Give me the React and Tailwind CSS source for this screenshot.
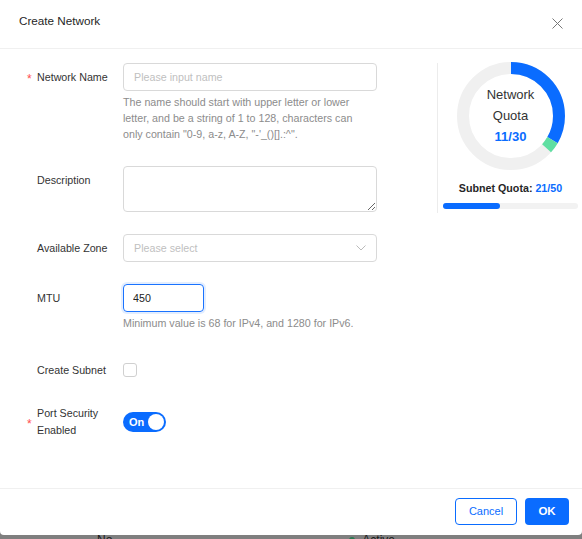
import React from "react";

const Label = ({ required, children }) => (
  <div className="w-[96px] shrink-0 flex items-start">
    <span className="w-[10px] h-[28px] flex items-center text-[#ff4d4f] text-[12px] leading-none translate-y-[2px]">
      {required ? "*" : ""}
    </span>
    <span className="leading-[28px] text-[#333]">{children}</span>
  </div>
);

const Donut = () => {
  const r = 48;
  const c = 2 * Math.PI * r;
  const used = (10 / 30) * c;
  const adding = (1 / 30) * c;
  return (
    <div className="relative w-[110px] h-[110px] mx-auto -mt-[2px]">
      <svg width="110" height="110" viewBox="0 0 110 110">
        <g transform="rotate(-90 55 55)">
          <circle cx="55" cy="55" r={r} fill="none" stroke="#f0f0f0" strokeWidth="12" />
          <circle
            cx="55"
            cy="55"
            r={r}
            fill="none"
            stroke="#0a6cff"
            strokeWidth="12"
            strokeDasharray={`${used} ${c}`}
          />
          <circle
            cx="55"
            cy="55"
            r={r}
            fill="none"
            stroke="#5fdfa2"
            strokeWidth="12"
            strokeDasharray={`0 ${used} ${adding} ${c}`}
          />
        </g>
      </svg>
      <div className="absolute inset-0 flex flex-col items-center justify-center text-[13px] leading-[21px] text-[#333] pb-[1px]">
        <span>Network</span>
        <span>Quota</span>
        <span className="font-bold text-[#0a6cff]">11/30</span>
      </div>
    </div>
  );
};

export default function App() {
  return (
    <div className="w-[582px] h-[539px] overflow-hidden bg-[#7f7f7f] font-['Liberation_Sans',Arial,sans-serif] text-[10.7px]">
      <div className="bg-white h-[535px] flex flex-col rounded-b-[4px]">
        {/* Header */}
        <div className="h-[49px] shrink-0 border-b border-[#f0f0f0] flex items-start justify-between pl-[19px] pr-[19px] pt-[13px]">
          <span className="text-[11.7px] leading-[16px] text-[#262626]">Create Network</span>
          <svg width="11" height="11" viewBox="0 0 11 11" className="mt-[5px]">
            <path d="M0.5 0.5 L10.5 10.5 M10.5 0.5 L0.5 10.5" stroke="#777" strokeWidth="1" />
          </svg>
        </div>

        {/* Body */}
        <div className="flex-1 flex pt-[14px]">
          <div className="w-[437px] shrink-0 pl-[27px]">
            {/* Network Name */}
            <div className="flex">
              <Label required>Network Name</Label>
              <div className="w-[254px]">
                <input
                  className="w-full h-[28px] border border-[#d9d9d9] rounded-[4px] px-[10px] outline-none placeholder:text-[#bfbfbf] text-[10.7px]"
                  placeholder="Please input name"
                  readOnly
                />
                <p className="mt-[3px] pr-[4px] leading-[16px] text-[#8c8c8c]">
                  The name should start with upper letter or lower letter, and be a string of 1 to 128, characters can only contain "0-9, a-z, A-Z, "-'_()[].:^".
                </p>
              </div>
            </div>

            {/* Description */}
            <div className="flex mt-[24px]">
              <Label>Description</Label>
              <textarea
                className="w-[254px] h-[46px] border border-[#d9d9d9] rounded-[4px] px-[10px] outline-none"
                readOnly
              />
            </div>

            {/* Available Zone */}
            <div className="flex mt-[22px]">
              <Label>Available Zone</Label>
              <div className="w-[254px] h-[28px] border border-[#d9d9d9] rounded-[4px] pl-[10px] pr-[10px] flex items-center justify-between">
                <span className="text-[#bfbfbf]">Please select</span>
                <svg width="10" height="6" viewBox="0 0 10 6">
                  <path d="M0.5 0.5 L5 5 L9.5 0.5" fill="none" stroke="#bbb" strokeWidth="1" />
                </svg>
              </div>
            </div>

            {/* MTU */}
            <div className="flex mt-[22px]">
              <Label>MTU</Label>
              <div>
                <input
                  className="w-[81px] h-[28px] border border-[#1a73ff] rounded-[4px] px-[9px] outline-none shadow-[0_0_0_2px_rgba(26,115,255,0.12)] text-[#222] text-[10.7px]"
                  defaultValue="450"
                  readOnly
                />
                <p className="mt-[3px] leading-[16px] text-[#8c8c8c]">
                  Minimum value is 68 for IPv4, and 1280 for IPv6.
                </p>
              </div>
            </div>

            {/* Create Subnet */}
            <div className="flex mt-[25px]">
              <Label>Create Subnet</Label>
              <div className="h-[28px] flex items-center">
                <span className="w-[14px] h-[14px] border border-[#d0d0d0] rounded-[3px] bg-white" />
              </div>
            </div>

            {/* Port Security */}
            <div className="flex items-center mt-[21px]">
              <div className="w-[96px] shrink-0 flex items-center">
                <span className="w-[10px] text-[#ff4d4f] text-[12px] leading-none translate-y-[2px]">*</span>
                <span className="leading-[17px] text-[#333] w-[70px]">Port Security Enabled</span>
              </div>
              <div className="w-[43px] h-[20px] rounded-full bg-[#0a6cff] flex items-center justify-between pl-[6px] pr-[2px]">
                <span className="text-white font-bold text-[11px]">On</span>
                <span className="w-[16px] h-[16px] rounded-full bg-white" />
              </div>
            </div>
          </div>

          {/* Quota panel */}
          <div className="w-[145px] h-[150px] border-l border-[#ececec] pl-[5px] pr-[4px]">
            <Donut />
            <div className="mt-[9px] text-center font-bold leading-[16px] text-[#262626]">
              Subnet Quota: <span className="text-[#0a6cff]">21/50</span>
            </div>
            <div className="mt-[7px] h-[6px] rounded-full bg-[#f2f2f2]">
              <div className="h-full w-[42%] rounded-full bg-[#0a6cff]" />
            </div>
          </div>
        </div>

        {/* Footer */}
        <div className="shrink-0 border-t border-[#f0f0f0] flex justify-end gap-[8px] pt-[9px] pb-[10px] pr-[13px]">
          <button className="w-[62px] h-[27px] border border-[#0a6cff] rounded-[4px] text-[#0a6cff] text-[11px] bg-white">
            Cancel
          </button>
          <button className="w-[44px] h-[27px] rounded-[4px] bg-[#0a6cff] text-white font-bold text-[11.5px]">
            OK
          </button>
        </div>
      </div>

      {/* Dimmed table behind the overlay */}
      <div className="h-[4px] overflow-hidden flex items-start text-[12px] text-[#1a1a1a]">
        <div className="flex items-center -mt-[4px] w-full">
          <span className="ml-[97px]">No</span>
          <span className="ml-[237px] w-[6px] h-[6px] rounded-full bg-[#2b7a52]" />
          <span className="ml-[7px]">Active</span>
        </div>
      </div>
    </div>
  );
}
